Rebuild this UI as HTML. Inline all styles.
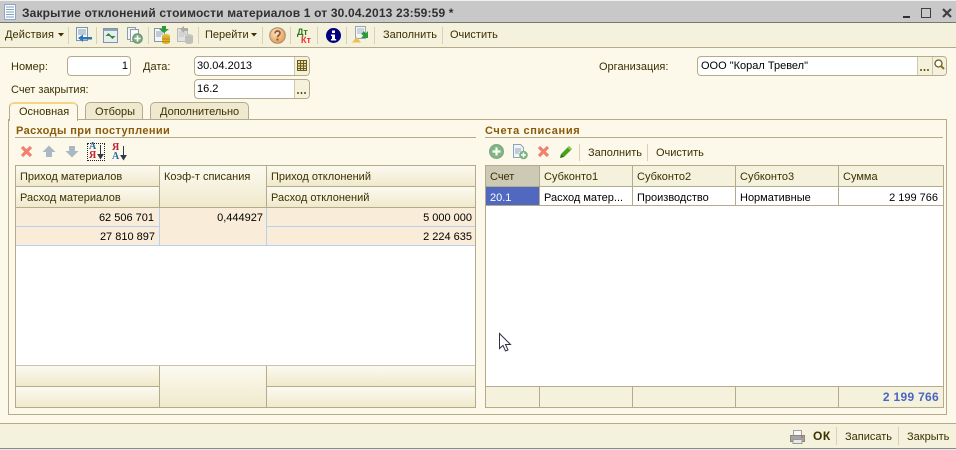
<!DOCTYPE html>
<html><head><meta charset="utf-8">
<style>
html,body{margin:0;padding:0}
body{width:956px;height:450px;position:relative;overflow:hidden;background:#fcf9ea;font-family:"Liberation Sans",sans-serif;font-size:11px;color:#3c3000}
.a{position:absolute;box-sizing:border-box}
.t{position:absolute;white-space:nowrap;line-height:14px;height:14px}
.r{text-align:right}
.k{color:#000}
.sep{position:absolute;width:1px;top:27px;height:17px;background:#d8d2b4}
.inp{position:absolute;box-sizing:border-box;background:#fff;border:1px solid #b5ab8a;border-radius:4px;height:20px}
.hd{position:absolute;box-sizing:border-box;background:linear-gradient(#fbfaf0,#f0e9cc);border-right:1px solid #b5ab8a;border-bottom:1px solid #b5ab8a}
.cell{position:absolute;box-sizing:border-box;background:#f9ecd8;border-right:1px solid #b8d0ec;border-bottom:1px solid #b8d0ec}
.c2{position:absolute;box-sizing:border-box;background:#fff;border-right:1px solid #b5ab8a;border-bottom:1px solid #b5ab8a}
.h2{position:absolute;box-sizing:border-box;background:#f4f1dc;border-right:1px solid #b5ab8a;border-bottom:1px solid #b5ab8a}
svg{position:absolute;overflow:visible}
.title{font-weight:bold;color:#8a5a08}
</style></head><body>

<!-- title bar -->
<div class="a" style="left:0;top:0;width:956px;height:1px;background:#f0f0f0"></div>
<div class="a" style="left:0;top:1px;width:956px;height:21px;background:#c8c8c8"></div>
<div class="a" style="left:0;top:22px;width:956px;height:1px;background:#77776f"></div>
<svg style="left:3px;top:4px" width="14" height="16" viewBox="0 0 14 16"><path d="M1.500.5h11v15h-11z" fill="#f8fbff" stroke="#8ea6c0"/><path d="M3 3h8M3 5.500h8M3 8h8M3 10.500h8M3 13h8" stroke="#8aa0b8"/></svg>
<div class="t" style="left:22px;top:6px;font-size:12px;font-weight:bold;color:#303030;letter-spacing:.16px">Закрытие отклонений стоимости материалов 1 от 30.04.2013 23:59:59 *</div>
<svg style="left:900px;top:7px" width="52" height="13" viewBox="0 0 52 13"><path d="M3 10h7" stroke="#303030" stroke-width="2"/><path d="M21.500 1.500h9v9h-9z" fill="none" stroke="#404040"/><path d="M43 2l8 8M51 2l-8 8" stroke="#404040" stroke-width="2.200"/></svg>

<!-- toolbar -->
<div class="a" style="left:0;top:23px;width:956px;height:24px;background:#f4f1dc"></div>
<div class="a" style="left:0;top:47px;width:956px;height:1px;background:#b5ab8a"></div>
<div class="t" style="left:5px;top:28px;letter-spacing:.1px">Действия</div>
<svg style="left:58px;top:33px" width="6" height="4"><path d="M0 0h6L3 3.500z" fill="#3c3000"/></svg>
<div class="sep" style="left:68px"></div>
<svg style="left:75px;top:27px" width="18" height="17" viewBox="0 0 18 17"><path d="M1.500.5h11v13h-11z" fill="#f6f8fb" stroke="#7f94ac"/><path d="M3 3h8M3 5h8M3 7h8" stroke="#8098b0"/><path d="M17 10H8V7.500L3 11l5 4v-2.500h9z" fill="#2d78b4"/></svg>
<div class="sep" style="left:96px"></div>
<svg style="left:103px;top:28px" width="15" height="15" viewBox="0 0 15 15"><path d="M.5.5h14v14H.5z" fill="#e8eef0" stroke="#7f94a4"/><path d="M1 1h13v2H1z" fill="#8ca4b8"/><path d="M2.500 8l3-3 3 3zM12.500 8l-3 3-3-3z" fill="#2e8b3a"/></svg>
<svg style="left:126px;top:27px" width="17" height="17" viewBox="0 0 17 17"><path d="M1.500.5h8v12h-8z" fill="#f0f2f4" stroke="#8c9cac"/><path d="M4.500 2.500h8v12h-8z" fill="#f8f9fa" stroke="#8c9cac"/><circle cx="11.500" cy="11.500" r="4.800" fill="#7cb07c" stroke="#6a8a70"/><path d="M11.500 8.500v6M8.500 11.500h6" stroke="#fff" stroke-width="1.600"/></svg>
<div class="sep" style="left:148px"></div>
<svg style="left:154px;top:26px" width="17" height="18" viewBox="0 0 17 18"><path d="M.5 2.500h10v13H.5z" fill="#f4f6f8" stroke="#8898a8"/><path d="M2 6h7M2 8h7M2 10h5" stroke="#8ca0b4"/><path d="M8 0h4v3h3l-5 4-5-4h3z" fill="#2a9a3c"/><ellipse cx="12" cy="10" rx="4" ry="2" fill="#e8c040"/><path d="M8 10h8v6c0 1-1.500 2-4 2s-4-1-4-2z" fill="#e0b030"/><path d="M8 13h8M8 15.500h8" stroke="#b88a18"/></svg>
<svg style="left:177px;top:26px" width="17" height="18" viewBox="0 0 17 18" opacity=".8"><path d="M.5 2.500h10v13H.5z" fill="#dde0e2" stroke="#a8aeb4"/><path d="M2 6h7M2 8h7M2 10h5" stroke="#b4b8bc"/><path d="M3 3l4-3v2h4v3H7v2z" fill="#a09c98"/><ellipse cx="12" cy="10" rx="4" ry="2" fill="#c0c0bc"/><path d="M8 10h8v6c0 1-1.500 2-4 2s-4-1-4-2z" fill="#b4b4b0"/></svg>
<div class="sep" style="left:198px"></div>
<div class="t" style="left:205px;top:28px">Перейти</div>
<svg style="left:251px;top:33px" width="6" height="4"><path d="M0 0h6L3 3.500z" fill="#3c3000"/></svg>
<div class="sep" style="left:262px"></div>
<svg style="left:269px;top:27px" width="17" height="17" viewBox="0 0 17 17"><defs><radialGradient id="g" cx=".4" cy=".35" r=".7"><stop offset="0" stop-color="#fbe3c4"/><stop offset="1" stop-color="#e59a48"/></radialGradient></defs><circle cx="8.500" cy="8.500" r="7.800" fill="url(#g)" stroke="#a88a70"/><path d="M6 6.500C6 5 7 4 8.500 4S11 5 11 6.300c0 2-2.500 2-2.500 4" fill="none" stroke="#8a5a3a" stroke-width="1.700"/><path d="M7.500 11.500h2v2h-2z" fill="#8a5a3a"/></svg>
<div class="sep" style="left:290px"></div>
<div class="t" style="left:297px;top:25px;font-size:9px;font-weight:bold;color:#2a7a1a">Дт</div>
<div class="t" style="left:301px;top:33px;font-size:9px;font-weight:bold;color:#f03030">Кт</div>
<div class="sep" style="left:317px"></div>
<svg style="left:326px;top:28px" width="15" height="15" viewBox="0 0 15 15"><circle cx="7.500" cy="7.500" r="7.500" fill="#000080"/><path d="M6 2.500h3v2.500H6zM5 6.500h4v4.500h1.200v1.500H5V11h1V8H5z" fill="#fff"/></svg>
<div class="sep" style="left:346px"></div>
<svg style="left:352px;top:26px" width="17" height="17" viewBox="0 0 17 17"><path d="M3.500.5h10v12h-10z" fill="#f2f4f6" stroke="#98a8b4"/><path d="M5 3h7M5 5h7M5 7h5" stroke="#a8b4c0"/><path d="M16 5v7H9l2.200-2.200-2-2 2.600-2.600 2 2z" fill="#2c9a3c"/><path d="M0 16.500L4.500 11 9 16.500z" fill="#eec050"/></svg>
<div class="sep" style="left:374px"></div>
<div class="t" style="left:383px;top:28px">Заполнить</div>
<div class="sep" style="left:442px"></div>
<div class="t" style="left:450px;top:28px">Очистить</div>

<!-- header form -->
<div class="t" style="left:11px;top:60px">Номер:</div>
<div class="inp" style="left:67px;top:56px;width:64px"></div>
<div class="t k r" style="left:67px;top:59px;width:61px">1</div>
<div class="t" style="left:143px;top:60px">Дата:</div>
<div class="inp" style="left:194px;top:56px;width:116px"></div>
<div class="t k" style="left:197px;top:59px">30.04.2013</div>
<div class="a" style="left:294px;top:57px;width:15px;height:18px;background:#f4f1dc;border-left:1px solid #cfc8a8;border-radius:0 3px 3px 0"></div>
<svg style="left:297px;top:60px" width="10" height="11" viewBox="0 0 10 11"><path d="M.5.500h9v10h-9z" fill="#e8dca0" stroke="#6a5a20"/><path d="M0 3.500h10M0 6h10M0 8.500h10M3.500 0v11M6.500 0v11" stroke="#6a5a20"/></svg>
<div class="t" style="left:11px;top:83px">Счет закрытия:</div>
<div class="inp" style="left:194px;top:79px;width:116px"></div>
<div class="t k" style="left:197px;top:82px">16.2</div>
<div class="a" style="left:294px;top:80px;width:15px;height:18px;background:#f4f1dc;border-left:1px solid #cfc8a8;border-radius:0 3px 3px 0"></div>
<div class="a" style="left:297px;top:92px;width:9px;height:2px;background:radial-gradient(circle at 1px 1px,#5a4a10 1px,transparent 1px) 0 0/3.500px 2px"></div>
<div class="t" style="left:599px;top:60px">Организация:</div>
<div class="inp" style="left:697px;top:56px;width:250px"></div>
<div class="t k" style="left:701px;top:59px">ООО "Корал Тревел"</div>
<div class="a" style="left:917px;top:57px;width:29px;height:18px;background:#f4f1dc;border-left:1px solid #cfc8a8;border-radius:0 3px 3px 0"></div>
<div class="a" style="left:932px;top:57px;width:1px;height:18px;background:#cfc8a8"></div>
<div class="a" style="left:920px;top:69px;width:9px;height:2px;background:radial-gradient(circle at 1px 1px,#5a4a10 1px,transparent 1px) 0 0/3.500px 2px"></div>
<svg style="left:934px;top:59px" width="11" height="12" viewBox="0 0 11 12"><circle cx="4.500" cy="4.500" r="3.500" fill="#fff" stroke="#6a5a20" stroke-width="1.300"/><path d="M7 7l3 3" stroke="#8a7020" stroke-width="2"/></svg>

<!-- tab panel -->
<div class="a" style="left:8px;top:119px;width:939px;height:296px;border:1px solid #b5ab8a"></div>
<div class="a" style="left:9px;top:102px;width:69px;height:19px;background:#fcf9ea;border:1px solid #b5ab8a;border-bottom:0;border-top:2px solid #f5d488;border-radius:5px 5px 0 0"></div>
<div class="t" style="left:19px;top:105px">Основная</div>
<div class="a" style="left:85px;top:102px;width:58px;height:17px;background:#efe9d0;border:1px solid #b5ab8a;border-bottom:0;border-radius:5px 5px 0 0"></div>
<div class="t" style="left:95px;top:105px">Отборы</div>
<div class="a" style="left:150px;top:102px;width:99px;height:17px;background:#efe9d0;border:1px solid #b5ab8a;border-bottom:0;border-radius:5px 5px 0 0"></div>
<div class="t" style="left:160px;top:105px">Дополнительно</div>

<!-- left section -->
<div class="t title" style="left:16px;top:124px;letter-spacing:.39px">Расходы при поступлении</div>
<div class="a" style="left:15px;top:137px;width:461px;height:1px;background:#b5ab8a"></div>
<svg style="left:20px;top:145px" width="13" height="13" viewBox="0 0 13 13"><path d="M2 2l9 9M11 2l-9 9" stroke="#f08070" stroke-width="3.200"/></svg>
<svg style="left:42px;top:145px" width="14" height="13" viewBox="0 0 14 13"><path d="M7 .5L13.500 7H10v5H4V7H.5z" fill="#a8b8c4"/></svg>
<svg style="left:65px;top:145px" width="14" height="13" viewBox="0 0 14 13"><path d="M7 12.500L13.500 6H10V1H4v5H.5z" fill="#a8b8c4"/></svg>
<div class="a" style="left:87px;top:143px;width:18px;height:18px;border:1px dotted #222"></div>
<div class="t" style="left:89px;top:142px;font:bold 10px/10px 'Liberation Serif',serif;color:#2a6aa0">А</div>
<div class="t" style="left:89px;top:151px;font:bold 10px/10px 'Liberation Serif',serif;color:#c02030">Я</div>
<svg style="left:97px;top:144px" width="7" height="16"><path d="M3.500 1v12M1 10.500l2.500 4 2.500-4z" fill="#303848" stroke="#303848"/></svg>
<div class="t" style="left:112px;top:143px;font:bold 10px/10px 'Liberation Serif',serif;color:#c02030">Я</div>
<div class="t" style="left:112px;top:152px;font:bold 10px/10px 'Liberation Serif',serif;color:#2a6aa0">А</div>
<svg style="left:120px;top:145px" width="7" height="16"><path d="M3.500 1v12M1 10.500l2.500 4 2.500-4z" fill="#303848" stroke="#303848"/></svg>

<!-- left table -->
<div class="a" style="left:15px;top:165px;width:461px;height:243px;background:#fff;border:1px solid #b5ab8a"></div>
<div class="hd" style="left:16px;top:166px;width:144px;height:21px"></div>
<div class="hd" style="left:16px;top:187px;width:144px;height:21px"></div>
<div class="hd" style="left:160px;top:166px;width:107px;height:42px"></div>
<div class="hd" style="left:267px;top:166px;width:208px;height:21px;border-right:0"></div>
<div class="hd" style="left:267px;top:187px;width:208px;height:21px;border-right:0"></div>
<div class="t" style="left:20px;top:170px">Приход материалов</div>
<div class="t" style="left:20px;top:191px">Расход материалов</div>
<div class="t" style="left:164px;top:170px">Коэф-т списания</div>
<div class="t" style="left:271px;top:170px">Приход отклонений</div>
<div class="t" style="left:271px;top:191px">Расход отклонений</div>
<div class="cell" style="left:16px;top:208px;width:144px;height:19px"></div>
<div class="cell" style="left:16px;top:227px;width:144px;height:19px"></div>
<div class="cell" style="left:160px;top:208px;width:107px;height:38px"></div>
<div class="cell" style="left:267px;top:208px;width:208px;height:19px;border-right:0"></div>
<div class="cell" style="left:267px;top:227px;width:208px;height:19px;border-right:0"></div>
<div class="t k r" style="left:20px;top:211px;width:134px">62 506 701</div>
<div class="t k r" style="left:20px;top:230px;width:135px">27 810 897</div>
<div class="t k r" style="left:164px;top:211px;width:99px">0,444927</div>
<div class="t k r" style="left:271px;top:211px;width:201px">5 000 000</div>
<div class="t k r" style="left:271px;top:230px;width:201px">2 224 635</div>
<!-- left footer -->
<div class="a" style="left:16px;top:365px;width:459px;height:1px;background:#c8c2a8"></div>
<div class="hd" style="left:16px;top:366px;width:144px;height:21px"></div>
<div class="hd" style="left:16px;top:387px;width:144px;height:20px;border-bottom:0"></div>
<div class="hd" style="left:160px;top:366px;width:107px;height:41px;border-bottom:0"></div>
<div class="hd" style="left:267px;top:366px;width:208px;height:21px;border-right:0"></div>
<div class="hd" style="left:267px;top:387px;width:208px;height:20px;border-right:0;border-bottom:0"></div>

<!-- right section -->
<div class="t title" style="left:485px;top:124px;letter-spacing:.63px">Счета списания</div>
<div class="a" style="left:485px;top:137px;width:458px;height:1px;background:#b5ab8a"></div>
<svg style="left:489px;top:144px" width="15" height="15" viewBox="0 0 15 15"><circle cx="7.500" cy="7.500" r="7" fill="#7cb87c" stroke="#88a090"/><path d="M7.500 3.500v8M3.500 7.500h8" stroke="#fff" stroke-width="2.200"/></svg>
<svg style="left:513px;top:144px" width="15" height="16" viewBox="0 0 15 16"><path d="M.5.500h7l3 3v10H.5z" fill="#f0f4f8" stroke="#90a4b8"/><path d="M2 5h6M2 7h6M2 9h4" stroke="#90a4b8"/><circle cx="10.500" cy="11" r="4.300" fill="#7cb07c"/><path d="M10.500 8.500v5M8 11h5" stroke="#fff" stroke-width="1.500"/></svg>
<svg style="left:537px;top:145px" width="13" height="13" viewBox="0 0 13 13"><path d="M2 2l9 9M11 2l-9 9" stroke="#f08070" stroke-width="3.200"/></svg>
<svg style="left:559px;top:145px" width="14" height="14" viewBox="0 0 14 14"><path d="M10 1l3 3-8 8-3-3z" fill="#4aa020"/><path d="M2 9l3 3-4 1z" fill="#2a6a10"/><path d="M10 1l3 3-1.500 1.500-3-3z" fill="#88d050"/></svg>
<div class="a" style="left:579px;top:144px;width:1px;height:17px;background:#d8d2b4"></div>
<div class="t" style="left:588px;top:146px">Заполнить</div>
<div class="a" style="left:647px;top:144px;width:1px;height:17px;background:#d8d2b4"></div>
<div class="t" style="left:656px;top:146px">Очистить</div>

<!-- right table -->
<div class="a" style="left:485px;top:165px;width:459px;height:243px;background:#fff;border:1px solid #b5ab8a"></div>
<div class="h2" style="left:486px;top:166px;width:54px;height:21px;background:#ccc9b4"></div>
<div class="h2" style="left:540px;top:166px;width:93px;height:21px"></div>
<div class="h2" style="left:633px;top:166px;width:103px;height:21px"></div>
<div class="h2" style="left:736px;top:166px;width:103px;height:21px"></div>
<div class="h2" style="left:839px;top:166px;width:104px;height:21px;border-right:0"></div>
<div class="t" style="left:490px;top:170px">Счет</div>
<div class="t" style="left:544px;top:170px">Субконто1</div>
<div class="t" style="left:637px;top:170px">Субконто2</div>
<div class="t" style="left:740px;top:170px">Субконто3</div>
<div class="t" style="left:843px;top:170px">Сумма</div>
<div class="c2" style="left:486px;top:187px;width:54px;height:19px;background:#5068c0"></div>
<div class="c2" style="left:540px;top:187px;width:93px;height:19px"></div>
<div class="c2" style="left:633px;top:187px;width:103px;height:19px"></div>
<div class="c2" style="left:736px;top:187px;width:103px;height:19px"></div>
<div class="c2" style="left:839px;top:187px;width:104px;height:19px;border-right:0"></div>
<div class="t" style="left:490px;top:191px;color:#fff">20.1</div>
<div class="t k" style="left:544px;top:191px">Расход матер...</div>
<div class="t k" style="left:637px;top:191px">Производство</div>
<div class="t k" style="left:740px;top:191px">Нормативные</div>
<div class="t k r" style="left:843px;top:191px;width:95px">2 199 766</div>
<!-- right footer -->
<div class="a" style="left:486px;top:386px;width:457px;height:1px;background:#b5ab8a"></div>
<div class="h2" style="left:486px;top:387px;width:54px;height:20px;border-bottom:0"></div>
<div class="h2" style="left:540px;top:387px;width:93px;height:20px;border-bottom:0"></div>
<div class="h2" style="left:633px;top:387px;width:103px;height:20px;border-bottom:0"></div>
<div class="h2" style="left:736px;top:387px;width:103px;height:20px;border-bottom:0"></div>
<div class="h2" style="left:839px;top:387px;width:104px;height:20px;border:0"></div>
<div class="t r" style="left:843px;top:390px;width:96px;font-weight:bold;font-size:12px;color:#4a66c0;letter-spacing:.3px">2 199 766</div>

<!-- cursor -->
<svg style="left:499px;top:333px" width="13" height="19" viewBox="0 0 13 19"><path d="M.5.500v15l3.500-3 2.500 5.500 2.500-1-2.500-5.500h5z" fill="#fff" stroke="#303048"/></svg>

<!-- footer -->
<div class="a" style="left:0;top:423px;width:956px;height:1px;background:#b5ab8a"></div>
<div class="a" style="left:0;top:424px;width:956px;height:24px;background:#f4f1dc"></div>
<div class="a" style="left:0;top:448px;width:956px;height:1px;background:#8a8a8a"></div>
<div class="a" style="left:0;top:449px;width:956px;height:1px;background:#e8e8e8"></div>
<svg style="left:790px;top:430px" width="15" height="14" viewBox="0 0 15 14"><path d="M3.500.5h8v5h-8z" fill="#f8f8f8" stroke="#a0a0a0"/><path d="M.5 5.500h14v6H.5z" fill="#a8a4a0" stroke="#888"/><path d="M3 9.500h9v4H3z" fill="#e8e8e8" stroke="#999"/><path d="M11 7h2" stroke="#d04040"/></svg>
<div class="t" style="left:813px;top:429px;font-weight:bold;font-size:12px;letter-spacing:.6px">ОК</div>
<div class="a" style="left:836px;top:427px;width:1px;height:18px;background:#d8d2b4"></div>
<div class="t" style="left:845px;top:430px">Записать</div>
<div class="a" style="left:898px;top:427px;width:1px;height:18px;background:#d8d2b4"></div>
<div class="t" style="left:907px;top:430px">Закрыть</div>
</body></html>
